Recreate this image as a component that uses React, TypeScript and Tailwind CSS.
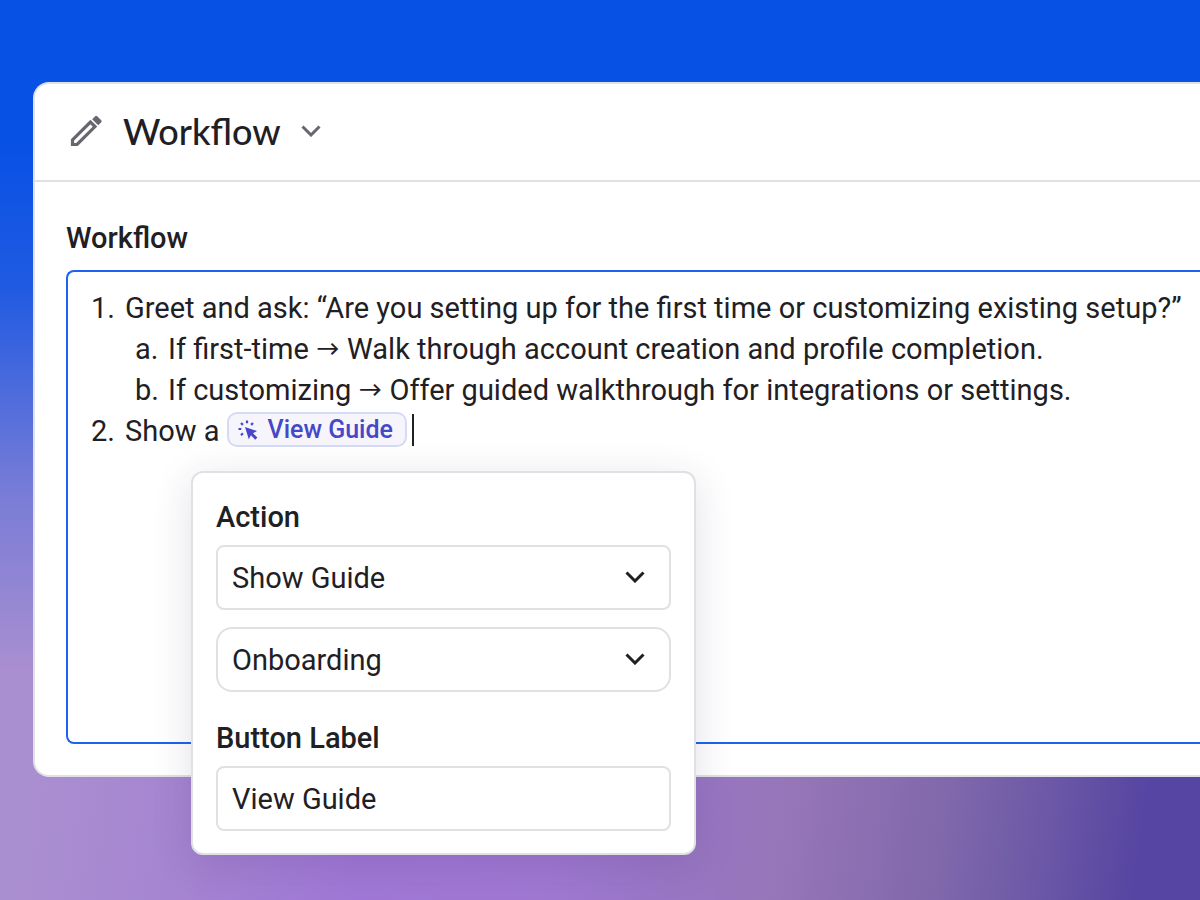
import { useState } from 'react';

interface PickerProps {
  label: string;
  value: string;
  options: string[];
  onChange: (value: string) => void;
  className: string;
}

function Chevron({ className }: { className: string }) {
  return (
    <svg viewBox="0 0 20 12" fill="none" stroke="currentColor" aria-hidden="true" className={className}>
      <path d="M1.5 1.5 10 10l8.5-8.5" />
    </svg>
  );
}

function PencilIcon() {
  return (
    <svg viewBox="0 0 32 32" className="w-8 h-8 text-[#66686d]" aria-hidden="true">
      <path d="M2.5 29.5v-4.600L20.400 7l4.600 4.600L7.100 29.500z" fill="none" stroke="currentColor" strokeWidth="3.2" />
      <path d="m22.200 4.200 3-3a1.500 1.500 0 0 1 2 0l4 4a1.500 1.500 0 0 1 0 2l-3 3z" fill="currentColor" />
    </svg>
  );
}

function ClickIcon() {
  return (
    <svg viewBox="0 0 20 20" className="w-5 h-5" aria-hidden="true">
      <path d="m7 7 12 4-4 2.200 4.400 4.400-2.100 2.100-4.400-4.400-2.100 4z" fill="currentColor" />
      <path
        d="M9 .5v2.800M3 3l1.900 1.900M15 3l-1.900 1.900M.5 9h2.800M3 15.200l1.900-1.900"
        stroke="currentColor"
        strokeWidth="2.2"
      />
    </svg>
  );
}

function Picker({ label, value, options, onChange, className }: PickerProps) {
  return (
    <div className="grid items-center">
      <select
        aria-label={label}
        value={value}
        onChange={(e) => onChange(e.target.value)}
        className={`col-start-1 row-start-1 w-full h-[65px] appearance-none border-2 border-[#e0e1e4] bg-white pt-0.5 pl-[14px] pr-16 outline-none ${className}`}
      >
        {options.map((option) => (
          <option key={option}>{option}</option>
        ))}
      </select>
      <Chevron className="col-start-1 row-start-1 justify-self-end mr-[26px] mb-0.5 w-5 h-3 stroke-3 pointer-events-none" />
    </div>
  );
}

function ActionPopover() {
  const [action, setAction] = useState('Show Guide');
  const [guide, setGuide] = useState('Onboarding');
  const [buttonLabel, setButtonLabel] = useState('View Guide');

  return (
    <section className="absolute left-[191px] top-[471px] w-[505px] rounded-xl border-2 border-[#e0e1e4] bg-white px-[23px] pt-6 pb-[22px] shadow-[0_8px_40px_rgba(40,30,80,0.14)]">
      <h3 className="mb-2 font-medium leading-10">Action</h3>
      <div className="flex flex-col gap-[17px]">
        <Picker
          label="Action"
          value={action}
          options={['Show Guide', 'Open Link']}
          onChange={setAction}
          className="rounded-lg"
        />
        <Picker
          label="Guide"
          value={guide}
          options={['Onboarding', 'Integrations']}
          onChange={setGuide}
          className="rounded-2xl"
        />
      </div>
      <label htmlFor="button-label" className="mt-[26px] mb-2 block font-medium leading-10">
        Button Label
      </label>
      <input
        id="button-label"
        value={buttonLabel}
        onChange={(e) => setButtonLabel(e.target.value)}
        className="block w-full h-[65px] rounded-lg border-2 border-[#e0e1e4] bg-white px-[14px] outline-none"
      />
    </section>
  );
}

export default function App() {
  return (
    <main className="relative min-h-screen overflow-hidden bg-[linear-gradient(to_bottom,#0851e5_0%,#0851e5_16%,rgba(8,81,229,0.85)_32%,rgba(8,81,229,0.3)_55%,rgba(8,81,229,0)_75%),linear-gradient(98deg,#aa8fd0_10%,#a585d1_22%,#a077d6_36%,#a078d2_50%,#9a76c8_58%,#9676b8_68%,#8068ab_80%,#6a57a6_88%,#5645a2_95%)] pt-[82px] pl-[33px] font-['Roboto','IBM_Plex_Sans',sans-serif] text-[29px] text-[#1f2024]">
      <div className="rounded-l-2xl border-2 border-r-0 border-[#e0e1e4] bg-white">
        <header className="flex items-center gap-[21px] h-[98px] border-b-2 border-[#e0e1e4] pl-[35px] pb-0.5">
          <PencilIcon />
          <h1 className="font-['Lato',sans-serif] text-4xl font-medium">
            <button className="flex items-center gap-5">
              Workflow
              <Chevron className="w-5 h-3 stroke-3 text-[#66686d]" />
            </button>
          </h1>
        </header>

        <div className="pl-[31px] pt-9 pb-[31px]">
          <h2 className="mb-3 font-medium leading-10">Workflow</h2>
          <div className="min-h-[474px] rounded-l-lg border-2 border-r-0 border-[#1f62f0] pl-[23px] pt-4 leading-[41px] whitespace-nowrap">
            <ol>
              <li className="flex gap-[10px]">
                <span className="w-6">1.</span>
                <div>
                  <p>Greet and ask: “Are you setting up for the first time or customizing existing setup?”</p>
                  <ol className="pl-[10px]">
                    <li className="flex gap-[9px]">
                      <span className="w-6">a.</span>
                      If first-time → Walk through account creation and profile completion.
                    </li>
                    <li className="flex gap-[9px]">
                      <span className="w-6">b.</span>
                      If customizing → Offer guided walkthrough for integrations or settings.
                    </li>
                  </ol>
                </div>
              </li>
              <li className="flex gap-[10px]">
                <span className="w-6">2.</span>
                <div className="flex items-center">
                  Show a
                  <button className="ml-[7px] mb-1 flex items-center gap-[10px] h-[35px] rounded-[10px] border-2 border-[#d5daf6] bg-[#f6f5fb] pl-[9px] pr-3 text-[25px] font-medium text-[#4648c8]">
                    <ClickIcon />
                    View Guide
                  </button>
                  <span className="ml-[5px] mb-1 w-[2px] h-8 bg-[#1f2024]" />
                </div>
              </li>
            </ol>
          </div>
        </div>
      </div>

      <ActionPopover />
    </main>
  );
}
